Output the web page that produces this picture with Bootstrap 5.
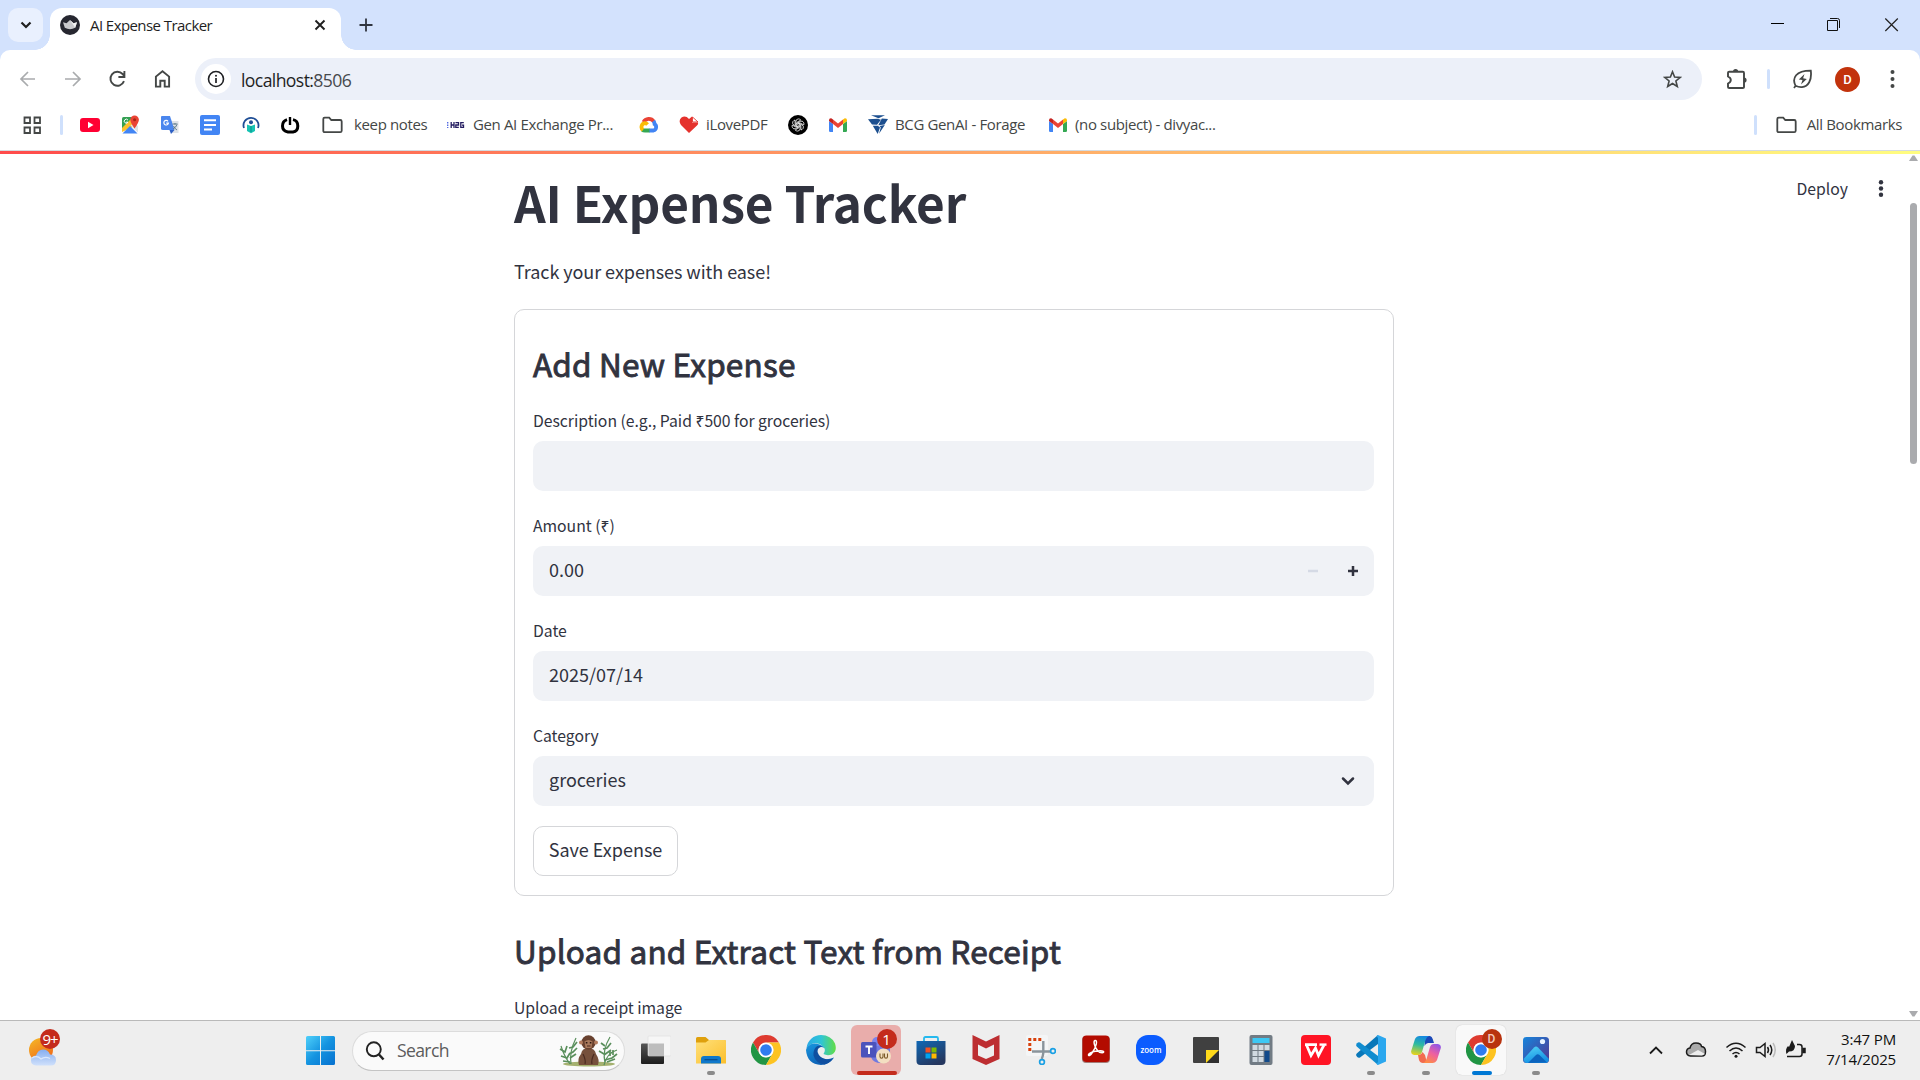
<!DOCTYPE html>
<html lang="en">
<head>
<meta charset="utf-8">
<title>AI Expense Tracker</title>
<meta name="viewport" content="width=device-width, initial-scale=1">
<link href="https://cdn.jsdelivr.net/npm/bootstrap@5.3.0/dist/css/bootstrap.min.css" rel="stylesheet">
<style>
body{width:1920px;height:1080px;overflow:hidden;background:#fff;font-family:"Open Sans","Noto Sans",sans-serif;color:#1f1f1f}
svg{display:block;flex:none}
.ui-text{white-space:nowrap;line-height:20px}
/* browser chrome */
.tabstrip{height:50px;background:#d3e2fd;flex:none}
.tabsearch{width:35px;height:34px;margin:8px 7px 0 8px;border-radius:10px;background:#e9f0fe}
.tab-active{position:relative;width:291px;height:42px;margin-top:8px;background:#fff;border-radius:12px 12px 0 0;padding:0 15px 8px 10px}
.tab-active::before,.tab-active::after{content:"";position:absolute;bottom:0;width:15px;height:15px}
.tab-active::before{left:-15px;background:radial-gradient(circle at 0 0,transparent 14.5px,#fff 15px)}
.tab-active::after{right:-15px;background:radial-gradient(circle at 100% 0,transparent 14.5px,#fff 15px)}
.tab-title{font-size:15px;letter-spacing:-.57px;margin-left:10px}
.toolbar-wrap{background:#d3e2fd;flex:none}
.toolbar{height:58px;background:#fff;border-radius:10px 10px 0 0}
.navicons{width:195px;padding-left:18px;gap:25px}
.omnibox{width:1507px;height:42px;border-radius:21px;background:#ecf0f9;padding:0 20px 0 6px}
.siteinfo{width:30px;height:30px;border-radius:50%;background:#fff}
.url{font-size:17.6px;margin-left:10px;padding-top:1px;letter-spacing:-.6px}
.url span{color:#46494d}
.avatar{width:25px;height:25px;border-radius:50%;background:#c2330c;color:#fff;font:500 13px Roboto,sans-serif}
.vsep{width:3px;height:20px;border-radius:2px;background:#cfe0fc;flex:none}
.bookmarks{height:42px;padding:0 18px 8px 23px;font-size:15px;letter-spacing:-.36px;color:#444746;flex:none}
.bookmarks .ui-text{margin-top:-2px}
.bm{display:flex;align-items:center;gap:7px;width:40px;flex:none;color:inherit;text-decoration:none}
.bm-folder{width:125px;gap:8px}
.bm-gen{width:194px;gap:8px}
.bm-love{width:109px}
.bm-bcg{width:180px}
/* app */
.app{height:870px;border-top:1px solid #d5dbe0;font-family:"Noto Sans CJK SC","Noto Sans CJK JP","Noto Sans",sans-serif;color:#31333f;overflow:hidden;position:relative;flex:none}
.deco{height:3px;background:linear-gradient(90deg,#ff4b4b,#fffd80)}
.main-col{width:880px;margin-left:514px;padding-top:15px}
.page-title{font-size:49.5px;line-height:66px;font-weight:700;margin:0 0 21px;white-space:nowrap;letter-spacing:-.15px}
.intro{font-size:18px;line-height:30px;margin:0 0 23px;letter-spacing:-.06px}
.form-box{height:587px;border:1px solid #d5d6d9;border-radius:10px;padding:19px 19px 0 18px}
.sub-title{font-size:31.5px;line-height:38px;font-weight:400;-webkit-text-stroke:.9px #31333f;letter-spacing:.2px;padding-top:15px;margin:0 0 24px;white-space:nowrap}
.field-label{display:block;font-size:15.75px;line-height:30px;margin-bottom:5px;white-space:nowrap;letter-spacing:-.03px}
.field-box{height:50px;border-radius:10px;background:#f0f2f6;font-size:18px;margin-bottom:20px;padding:0 16px 3px}
.save-btn{width:145px;height:50px;border:1px solid #d5d6d9;border-radius:10px;background:#fff;font-size:18px;color:#31333f;padding:0 0 3px;white-space:nowrap}
.app-tools{position:absolute;right:34px;top:23px;height:30px;font-size:15.75px;gap:30px}
.scroller{position:absolute;right:0;top:3px;width:14px;height:866px}
.thumb{height:261px;width:7px;border-radius:4px;background:#aaabae;margin:42px 0 0 4px}
.upload{margin-top:20px}
/* taskbar */
.taskbar{height:60px;border-top:1px solid #b9b9b9;background:#eee;flex:none}
.weather{width:306px;height:59px;padding:8px 0 0 28px}
.search-pill{width:273px;height:40px;margin:0 3.5px 0 16px;border-radius:20px;background:#fafafa;border:1px solid #dcdcdc;border-bottom-color:#c4c4c4;padding:0 5px 0 12px;font-size:17.6px;color:#5c5c5c}
.search-pill .ui-text{letter-spacing:-.65px;margin:-2px 0 0 12px}
.task{position:relative;width:55px;height:58px;display:flex;align-items:center;justify-content:center;align-self:flex-start;flex:none}
.run::after{content:"";position:absolute;bottom:4px;left:23.5px;width:8px;height:4px;border-radius:2px;background:#8a8a8a}
.tile{width:50px;height:50px;border-radius:6px;display:flex;align-items:center;justify-content:center}
.tile-red{background:#e9adab}
.tile-white{background:#f9f9f9;box-shadow:0 0 1px #bbb}
.dot{position:absolute;width:20px;height:20px;border-radius:50%;background:#c42b1c;color:#fff;font-size:15px;line-height:20px;text-align:center}
.bar-red{position:absolute;bottom:4px;left:8px;width:40px;height:4px;border-radius:2px;background:#c42b1c}
.bar-blue{position:absolute;bottom:4px;left:18px;width:20px;height:4px;border-radius:2px;background:#0078d4}
.tray{margin-left:auto;padding:0 24px 2px 0}
.clock{width:90px;text-align:right;font-size:15px;line-height:20px;letter-spacing:-.15px;margin-top:-1px;color:#111}
</style>
<script src="https://cdn.jsdelivr.net/npm/bootstrap@5.3.0/dist/js/bootstrap.bundle.min.js"></script>
</head>
<body class="d-flex flex-column">
<svg width="0" height="0" class="position-absolute">
  <defs>
    <symbol id="chrome" viewBox="0 0 30 30"><path fill="#de3b30" d="M2 7.5A15 15 0 0 1 28 7.5H15A7.5 7.5 0 0 0 8.500 18.750Z"/><path fill="#219544" d="M2 7.500A15 15 0 0 0 15 30L21.500 18.750A7.500 7.500 0 0 1 8.500 18.750Z"/><path fill="#fdc321" d="M28 7.500A15 15 0 0 1 15 30L21.500 18.750A7.500 7.500 0 0 0 15 7.500Z"/><circle cx="15" cy="15" r="7.300" fill="#fff"/><circle cx="15" cy="15" r="5.800" fill="#2f7cf0"/></symbol>
    <symbol id="gmail" viewBox="0 0 20 20"><path fill="#4285f4" d="M1 6l4 3v8H2.300Q1 17 1 15.700Z"/><path fill="#34a853" d="M19 6l-4 3v8h2.700q1.300 0 1.300-1.300Z"/><path fill="#ea4335" d="M5 4.500l5 4 5-4V9l-5 4-5-4Z"/><path fill="#c5221f" d="M1 5.200Q1 3 3.200 3.200L5 4.500V9L1 6Z"/><path fill="#fbbc04" d="M19 5.200Q19 3 16.800 3.200L15 4.500V9l4-3Z"/></symbol>
    <symbol id="folder" viewBox="0 0 21 18"><path fill="none" stroke="#444746" stroke-width="1.800" d="M1.300 14V2.900Q1.300 1.600 2.600 1.600H7.200L9.300 4H18.200Q19.700 4 19.700 5.400V14.800Q19.700 16.200 18.200 16.200H2.700Q1.300 16.200 1.300 14.800Z"/></symbol>
  </defs>
</svg>

<header>
  <div class="tabstrip d-flex">
    <div class="tabsearch d-flex align-items-center justify-content-center"><svg width="12" height="8" viewBox="0 0 12 8"><path d="M1.500 1.500L6 6l4.500-4.500" fill="none" stroke="#1f1f1f" stroke-width="2.200"/></svg></div>
    <div class="tab-active d-flex align-items-center">
      <svg width="20" height="20" viewBox="0 0 20 20"><circle cx="10" cy="10" r="10" fill="#262730"/><path d="M3 7.200l3.500 1L10 5l3.500 3.200 3.500-1-1.800 5.600Q10 15.500 4.800 12.800Z" fill="#c9cacd"/><path d="M10 5l3.500 3.200 3.500-1-1.800 5.600Z" fill="#f2f2f2"/></svg>
      <span class="ui-text tab-title">AI Expense Tracker</span>
      <svg class="ms-auto" width="12" height="12" viewBox="0 0 12 12"><path d="M1.500 1.500l9 9M10.500 1.500l-9 9" stroke="#1f1f1f" stroke-width="1.900"/></svg>
    </div>
    <svg style="margin:18px 0 0 18px" width="14" height="14" viewBox="0 0 14 14"><path d="M7 .5v13M.5 7h13" stroke="#303540" stroke-width="1.800"/></svg>
    <div class="ms-auto d-flex me-3 pe-1">
      <svg width="140" height="50" viewBox="0 0 140 50"><path d="M11 23.500h13" stroke="#000" stroke-width="1"/><path d="M67.500 20.500h10v10h-10ZM70 18.500h7.500q2 0 2 2V28" fill="none" stroke="#111" stroke-width="1"/><path d="M125.300 18.500l12.500 12.500M137.800 18.500L125.300 31" stroke="#222" stroke-width="1.200"/></svg>
    </div>
  </div>
  <div class="toolbar-wrap">
    <div class="toolbar d-flex align-items-center">
      <div class="navicons d-flex align-items-center">
        <svg width="20" height="20" viewBox="0 0 20 20"><path d="M17 10H3.500M10 3L3 10l7 7" fill="none" stroke="#a9abad" stroke-width="1.700"/></svg>
        <svg width="20" height="20" viewBox="0 0 20 20"><path d="M2 10h14.500M10 3l7 7-7 7" fill="none" stroke="#a9abad" stroke-width="1.700"/></svg>
        <svg width="20" height="20" viewBox="0 0 20 20"><path d="M16 12.200A7 7 0 1 1 14.600 5L16.200 6.800M16.400 2v6h-6" fill="none" stroke="#444746" stroke-width="1.900"/></svg>
        <svg width="20" height="20" viewBox="0 0 20 20"><path d="M2.900 17.600V7.600L9.500 2.200l6.600 5.400v10h-4.400v-5.800H7.300v5.800Z" fill="none" stroke="#444746" stroke-width="1.900"/></svg>
      </div>
      <div class="omnibox d-flex align-items-center">
        <div class="siteinfo d-flex align-items-center justify-content-center"><svg width="18" height="18" viewBox="0 0 18 18"><circle cx="9" cy="9" r="7.500" fill="none" stroke="#202124" stroke-width="1.600"/><path d="M9 8v5" stroke="#202124" stroke-width="1.700"/><circle cx="9" cy="5.700" r="1" fill="#202124"/></svg></div>
        <div class="ui-text url">localhost:<span>8506</span></div>
        <svg class="ms-auto" width="19" height="19" viewBox="0 0 19 19"><path d="M9.500 1.800l2.100 5.200 5.600.4-4.300 3.600 1.400 5.500-4.800-3-4.800 3L6.100 11 1.800 7.400 7.400 7Z" fill="none" stroke="#444746" stroke-width="1.600"/></svg>
      </div>
      <div class="d-flex align-items-center" style="margin-left:24px">
        <svg width="22" height="22" viewBox="0 0 22 22"><path d="M2 4.800Q2 3.700 3.200 3.700H16.800Q18 3.700 18 4.900V19.300Q18 20 16.800 20H3.200Q2 20 2 18.900V15.500Q4.800 14.200 4.800 12T2 8.500Z" fill="none" stroke="#444746" stroke-width="1.900"/><path d="M7 3.500a2.600 2.600 0 0 1 5.200 0ZM18 9.400a2.600 2.600 0 0 1 0 5.200Z" fill="#444746"/></svg>
        <div class="vsep" style="margin-left:19px"></div>
        <svg style="margin-left:22px" width="22" height="22" viewBox="0 0 22 22"><path d="M3.600 17.800C-.5 10 4 2.500 18.800 2.600c1.200 9.500-2.500 16-8.800 16.500-2.500.2-4.800-.5-6.400-1.300L2 20" fill="none" stroke="#444746" stroke-width="1.800"/><path d="M12.500 6L6.800 11.500l3.700.6-1.500 4.300 5.800-5.500-3.700-.6Z" fill="#444746"/></svg>
        <div class="avatar d-flex align-items-center justify-content-center" style="margin-left:21px">D</div>
        <svg style="margin-left:30px" width="5" height="20" viewBox="0 0 5 20"><g fill="#444746"><circle cx="2.500" cy="3" r="2"/><circle cx="2.500" cy="10" r="2"/><circle cx="2.500" cy="17" r="2"/></g></svg>
      </div>
    </div>
  </div>
  <nav class="bookmarks d-flex align-items-center">
    <svg width="19" height="19" viewBox="0 0 19 19"><path d="M1.500 1.500h5.500V7H1.500ZM11.500 1.500H17V7H11.500ZM1.500 11.500h5.500V17H1.500ZM11.500 11.500H17V17H11.500Z" fill="none" stroke="#444746" stroke-width="1.800"/></svg>
    <div class="vsep" style="margin:0 17px 0 18px"></div>
    <a class="bm" href="#"><svg width="20" height="20"><rect y="3" width="20" height="14" rx="3" fill="#ff0033"/><path d="M8 6.800v6.400l5.500-3.200Z" fill="#fff"/></svg></a>
    <a class="bm" href="#"><svg width="20" height="20" viewBox="0 0 20 20"><path d="M2 3.500Q2 2 3.500 2H15L2 15Z" fill="#34a053"/><path d="M2 17V13L12 3l3 8Z" fill="#fbc02d"/><path d="M2.500 18.500L10 11l7.500 7.500Z" fill="#4285f4"/><path d="M10.500 10.500L14 8l4 3v6.500Z" fill="#dfe3e6"/><path d="M14.500 13.500Q10.300 7.500 10.300 4.700a4.300 4.300 0 0 1 8.600 0Q18.900 7.500 14.500 13.500Z" fill="#ea4335"/><circle cx="14.600" cy="4.800" r="1.500" fill="#a52714"/><path d="M8 5.200A2 2 0 1 0 8 7.200H6" fill="none" stroke="#fff"/></svg></a>
    <a class="bm" href="#"><svg width="20" height="20" viewBox="0 0 20 20"><path d="M8 6h10.500v12H12Z" fill="#dfe3e8"/><path d="M2 1h8l4.500 14H3Q1 15 1 13.500V2Q1 1 2 1Z" fill="#4a86ee"/><path d="M9.500 15h5L11 19Z" fill="#2e60c4"/><path d="M8 6.300A2.300 2.300 0 1 0 8.400 8.200H6.200" fill="none" stroke="#fff" stroke-width="1.200"/><path d="M12.500 9h5M15 8v1.500M17 9.500q-1 3-4 4.500M13.500 11q1.500 3 3.500 4" fill="none" stroke="#607d8b"/></svg></a>
    <a class="bm" href="#"><svg width="20" height="20"><rect width="20" height="20" rx="2" fill="#4285f4"/><path d="M4 5.200h12M4 9.900h12M4 14.600h8" stroke="#fff" stroke-width="2"/></svg></a>
    <a class="bm" href="#"><svg width="20" height="20" viewBox="0 0 20 20"><path d="M4 13A7.500 7.500 0 1 1 18 13" fill="none" stroke="#1f4e96" stroke-width="1.800"/><circle cx="11" cy="7.200" r="2" fill="#1f4e96"/><path d="M7 9.500l4 1.500 4-1.500v6.500l-4 2.200-4-2.200Z" fill="#16c3b3"/><path d="M11 11v6" stroke="#0a8f88"/></svg></a>
    <a class="bm" href="#"><svg width="20" height="20" viewBox="0 0 20 20"><path d="M7 4.600Q2.500 6 2.500 11T8 17h5q4.800-.5 4.800-6T13 4.600" fill="none" stroke="#000" stroke-width="3"/><path d="M10 2v8" stroke="#000" stroke-width="2.400"/></svg></a>
    <a class="bm bm-folder" style="padding-left:2px" href="#"><svg width="21" height="18"><use href="#folder"/></svg><span class="ui-text ps-1 ms-n1" style="margin-left:-1px">keep notes</span></a>
    <a class="bm bm-gen" href="#"><svg width="20" height="20" viewBox="0 0 20 20"><g fill="none" stroke="#241c61" stroke-width="1.300"><path d="M6.200 7v6M9 7v6M6.200 10H9M10.500 7.700h3V10H10.800v2.300h3M18.800 7.700h-3v4.600h2.700V10.200H17"/><path d="M2.700 7v6" stroke="#4b64e0" stroke-dasharray="1.500 1"/></g></svg><span class="ui-text">Gen AI Exchange Pr...</span></a>
    <a class="bm" href="#"><svg width="20" height="20" viewBox="0 0 20 20"><g fill="none" stroke-width="3.800"><path d="M4.500 7.200A6 6 0 0 1 14.800 6.500" stroke="#ea4335"/><path d="M14.500 6Q15.500 7.300 15.600 9.200A3.500 3.500 0 0 1 14.500 15.500H10" stroke="#4285f4"/><path d="M10.500 15.500H6Q4.300 15.500 3.300 14.700" stroke="#34a853"/><path d="M4 15A3.800 3.800 0 0 1 5.800 8.200Q7.400 8.200 8.600 9.500" stroke="#fbbc04"/></g></svg></a>
    <a class="bm bm-love" href="#"><svg width="20" height="20" viewBox="0 0 20 20"><path d="M10 18L2 10Q-1 5.500 2.500 2.500 6.500 0 10 4L13 1.500V7.500H19Q19.500 9 18 10.500Z" fill="#e5322d"/><path d="M13.500 2v5H19Z" fill="#fff" stroke="#e5322d" stroke-width=".9"/></svg><span class="ui-text">iLovePDF</span></a>
    <a class="bm" href="#"><svg width="20" height="20" viewBox="0 0 20 20"><circle cx="10" cy="10" r="10" fill="#000"/><g fill="none" stroke="#fff" stroke-width=".75"><path id="petal" d="M8 10.800V6.200Q8.200 3.900 10.500 3.900 12 4 12.800 5L9 7.300V10"/><use href="#petal" transform="rotate(60 10 10)"/><use href="#petal" transform="rotate(120 10 10)"/><use href="#petal" transform="rotate(180 10 10)"/><use href="#petal" transform="rotate(240 10 10)"/><use href="#petal" transform="rotate(300 10 10)"/></g></svg></a>
    <a class="bm" href="#"><svg width="20" height="20"><use href="#gmail"/></svg></a>
    <a class="bm bm-bcg" href="#"><svg width="20" height="20" viewBox="0 0 20 20"><g fill="#1c4f8f"><path d="M3 .3h14L10.500 3.200Z"/><path d="M0 4.200l9.500-.4 3.500.9L9 9.800 4 9.500Z"/><path d="M13.800 3.600L20 4l-3.500 5.500L10.300 10.200Z"/><path d="M4.800 10.800l5-.1L12 12.500 9.700 19Z"/><path d="M11.500 10.900l5.300-.8L11 18.800l1.800-6.300Z"/></g></svg><span class="ui-text">BCG GenAI - Forage</span></a>
    <a class="bm" href="#"><svg width="20" height="20"><use href="#gmail"/></svg><span class="ui-text">(no subject) - divyac...</span></a>
    <div class="ms-auto d-flex align-items-center"><div class="vsep"></div><svg style="margin:0 10px 0 19px" width="21" height="18"><use href="#folder"/></svg><span class="ui-text">All Bookmarks</span></div>
  </nav>
</header>

<main class="app">
  <div class="deco"></div>
  <div class="main-col">
    <h1 class="page-title">AI Expense Tracker</h1>
    <p class="intro">Track your expenses with ease!</p>
    <form class="form-box">
      <h3 class="sub-title">Add New Expense</h3>
      <label class="field-label">Description (e.g., Paid ₹500 for groceries)</label>
      <div class="field-box"></div>
      <label class="field-label">Amount (₹)</label>
      <div class="field-box d-flex align-items-center">0.00
        <svg class="ms-auto" style="margin-top:3px" width="50" height="12" viewBox="0 0 50 12"><path d="M0 6h10" stroke="#d5dae5" stroke-width="2.500"/><path d="M40 6h10M45 1v10" stroke="#31333f" stroke-width="2.500"/></svg>
      </div>
      <label class="field-label">Date</label>
      <div class="field-box d-flex align-items-center">2025/07/14</div>
      <label class="field-label">Category</label>
      <div class="field-box d-flex align-items-center">groceries
        <svg class="ms-auto" style="margin:3px 3px 0 0" width="14" height="10" viewBox="0 0 14 10"><path d="M2 2.500l5 5 5-5" fill="none" stroke="#31333f" stroke-width="2.500" stroke-linecap="round"/></svg>
      </div>
      <button type="button" class="save-btn">Save Expense</button>
    </form>
    <section class="upload">
      <h3 class="sub-title">Upload and Extract Text from Receipt</h3>
      <label class="field-label">Upload a receipt image</label>
    </section>
  </div>
  <div class="app-tools d-flex align-items-center"><span>Deploy</span><svg style="margin-right:2px" width="6" height="20" viewBox="0 0 6 20"><g fill="#31333f"><circle cx="3" cy="3.200" r="2.200"/><circle cx="3" cy="9.500" r="2.200"/><circle cx="3" cy="15.800" r="2.200"/></g></svg></div>
  <div class="scroller d-flex flex-column">
    <svg style="margin:1px 0 0 3px" width="9" height="6"><path d="M0 6L3.500 0.500h2L9 6Z" fill="#aaabae"/></svg>
    <div class="thumb"></div>
    <svg class="mt-auto" style="margin:0 0 3px 3px" width="9" height="6"><path d="M0 0L3.500 5.500h2L9 0Z" fill="#aaabae"/></svg>
  </div>
</main>

<footer class="taskbar d-flex align-items-center">
  <div class="weather position-relative">
    <svg width="32" height="38" viewBox="0 0 32 38"><defs><linearGradient id="sun" x2=".6" y2="1"><stop stop-color="#f5ba28"/><stop offset="1" stop-color="#f06b18"/></linearGradient><linearGradient id="cl" x2="0" y2="1"><stop stop-color="#86aef0"/><stop offset="1" stop-color="#cfe0fb"/></linearGradient></defs><circle cx="13" cy="21" r="12" fill="url(#sun)"/><path d="M8 36.500Q3 36 3 31.500T8 26.500Q10 20.500 15 20.500T22 25.500Q28 25.500 28 31T23 36.500Z" fill="url(#cl)"/><path d="M4 29q5-3 9 1 4-3 9-.5" fill="none" stroke="#dbe8fc" stroke-width="1.200"/></svg>
    <span class="dot" style="left:40px;top:8px;letter-spacing:-1px">9+</span>
  </div>
  <svg width="30" height="30" viewBox="0 0 30 30"><defs><linearGradient id="win" x2="1" y2="1"><stop stop-color="#4fd0fa"/><stop offset=".5" stop-color="#1493e0"/><stop offset="1" stop-color="#0670cf"/></linearGradient></defs><path fill="url(#win)" d="M1.500 0H14V14.200H0V1.500Q0 0 1.500 0ZM15 0H27.500Q29 0 29 1.500V14.200H15ZM0 15.200H14V29H1.500Q0 29 0 27.500ZM15 15.200H29V27.500Q29 29 27.500 29H15Z"/></svg>
  <div class="search-pill d-flex align-items-center">
    <svg width="20" height="20" viewBox="0 0 20 20"><circle cx="8.800" cy="8.300" r="7" fill="none" stroke="#222" stroke-width="1.900"/><path d="M14 13.500l4.500 5" stroke="#222" stroke-width="2.500"/></svg>
    <span class="ui-text">Search</span>
    <svg class="ms-auto" width="60" height="34" viewBox="0 0 60 34"><ellipse cx="30" cy="30" rx="26" ry="2.500" fill="#a5b170"/><g fill="none" stroke="#5a8f5c" stroke-width="1.200"><path d="M11 30Q5 22 2 12M12 30Q10 18 17 4M46 29Q43 16 51 3M45 31Q48 19 58 16"/><path d="M1 15l5 3 2-6M2 22l6 2 3-5M4 27l7 1M10 14l4-1 4-5M10 20l4-2 4-4M11 24l6-4M44 15l4-1 4-5M42 9l4 3M40 17l5 3M45 21l7-5M46 26l7-2 5-4M48 28l8-3M51 22v-5M54 21v-5" stroke-width="1.700"/></g><path d="M20 31Q18 25 22 20 23 14 29 14 36 14 37 20 41 26 39 31Z" fill="#76503c"/><circle cx="29.500" cy="8.500" r="7.200" fill="#68412f"/><circle cx="22" cy="8.500" r="2" fill="#b37c5f"/><circle cx="37" cy="8.500" r="2" fill="#b37c5f"/><path d="M25.500 7.500Q29.500 4.500 33.500 7.500L32.500 14H26.500Z" fill="#a8785c"/><path d="M26.800 8.700h1.600M30.800 8.700h1.600" stroke="#2b1710" stroke-width="1.500"/><path d="M28 12h3.500M24 20q3 6 2 10M35 20q-3 6-2 10" fill="none" stroke="#4a2b20" stroke-width="1.200"/></svg>
  </div>

  <div class="task"><svg width="30" height="30" viewBox="0 0 30 30"><defs><linearGradient id="tv" x2="0" y2="1"><stop stop-color="#555"/><stop offset="1" stop-color="#1d1d1d"/></linearGradient></defs><rect y="8.500" width="23" height="20.500" rx="1" fill="url(#tv)"/><rect x="7" y="1" width="23" height="20" rx="1" fill="#f6f6f6" stroke="#ddd" stroke-width=".6"/><path d="M7.500 8.500H23V21H7.500Z" fill="#bdbdbd"/></svg></div>
  <div class="task run"><svg width="30" height="30" viewBox="0 0 30 30"><defs><linearGradient id="fo" x2="1" y2="1"><stop stop-color="#ffe07a"/><stop offset="1" stop-color="#fbbf2c"/></linearGradient></defs><path d="M0 9V3.500Q0 2 1.500 2H9.500L13 5H28.500Q30 5 30 6.500V12H0Z" fill="#dfa00c"/><path d="M0 7.500H9.500L13 5H28.500Q30 5 30 6.500V28.500H0Z" fill="url(#fo)"/><path d="M5 28.500V24Q5 21 8 21H22Q25 21 25 24v4.500Z" fill="#0f78cb"/><path d="M8.500 24.700h13" stroke="#0a4c8c" stroke-width="1.200"/></svg></div>
  <div class="task"><svg width="30" height="30"><use href="#chrome"/></svg></div>
  <div class="task"><svg width="30" height="30" viewBox="0 0 30 30"><defs><linearGradient id="ed" x2="1"><stop stop-color="#2aa9e6"/><stop offset=".5" stop-color="#2fc5d6"/><stop offset="1" stop-color="#62dd45"/></linearGradient><linearGradient id="ed2" x2=".5" y2="1"><stop stop-color="#1896df"/><stop offset="1" stop-color="#0d5fb4"/></linearGradient></defs><path d="M.5 13A14.600 14.600 0 0 1 15 0Q25 0 29 8.500 31.500 16.500 26 19.500 21 21 17.500 19 19.500 16 18.500 13.500 14.500 7.500 7 8.500 3 9.500.5 13Z" fill="url(#ed)"/><path d="M0 15Q1 9.500 8 8.500 15 8.500 18.300 13 14.500 10.500 11.700 14 9.500 19 14.500 22.500 20 26 28 22.500 23 30 15 30 1 29 0 15Z" fill="url(#ed2)"/><path d="M10 12Q12.500 10 16.500 11.500 11 12 11.500 17 13.500 23 20 24.200T28 22.500Q24 28 18.500 29.500 9.500 28 7.500 20.500 7 15.500 10 12Z" fill="#0f4fa0"/></svg></div>
  <div class="task"><div class="tile tile-red"><svg width="30" height="30" viewBox="0 0 30 30"><circle cx="16" cy="7" r="5" fill="#7b83eb"/><circle cx="25" cy="10" r="4" fill="#5059c9"/><path d="M10 11H29V18Q28 26 20 28 12 28 10 22Z" fill="#7079df"/><rect y="7" width="15.500" height="15.500" rx="1.500" fill="#4b53bc"/><path d="M4.500 11.500h7M8 11.500v7.500" stroke="#fff" stroke-width="1.900"/><circle cx="22.500" cy="21" r="7.500" fill="#f3dfc1"/><path d="M19 18.500v3q0 1.700 1.500 1.700T22 21.500v-3M23.500 18.500v3q0 1.700 1.500 1.700t1.500-1.700v-3" fill="none" stroke="#7a5a28" stroke-width="1.100"/></svg></div><span class="dot" style="left:28px;top:8px">1</span><span class="bar-red"></span></div>
  <div class="task"><svg width="30" height="30" viewBox="0 0 30 30"><defs><linearGradient id="st" x2=".6" y2="1"><stop stop-color="#1068b5"/><stop offset="1" stop-color="#25375f"/></linearGradient></defs><path d="M8 7V3.500Q8 2 9.500 2h11Q22 2 22 3.500V7" fill="none" stroke="#25b9ee" stroke-width="1.800"/><path d="M.5 6H29.500V26Q29.500 30 25.500 30H4.500Q.5 30 .5 26Z" fill="url(#st)"/><path fill="#f25022" d="M9.500 12.500h5v5h-5Z"/><path fill="#7fba00" d="M15.500 12.500h5v5h-5Z"/><path fill="#00a4ef" d="M9.500 18.500h5v5h-5Z"/><path fill="#ffb900" d="M15.500 18.500h5v5h-5Z"/></svg></div>
  <div class="task"><svg width="30" height="30" viewBox="0 0 30 30"><path d="M1.500 0L15 6.500 28.500 0V24L15 30 1.500 24Z" fill="#bd2e31"/><path d="M7 9.500L15 13.500 23 9.500V20.500L15 24 7 20.500Z" fill="#eee"/></svg></div>
  <div class="task"><svg width="30" height="30" viewBox="0 0 30 30"><rect width="22" height="21" rx="2" fill="#f4f5f6"/><path d="M3.800 16V4.500H16.500" fill="none" stroke="#d8400a" stroke-width="3" stroke-dasharray="3 2"/><path d="M17.300 6V18Q17 21 15.700 24M6 16.500H19L25 16.500" fill="none" stroke="#8a949b" stroke-width="2.400"/><circle cx="27" cy="16" r="2.400" fill="none" stroke="#1aa0e4" stroke-width="1.700"/><circle cx="16" cy="27" r="2.400" fill="none" stroke="#1aa0e4" stroke-width="1.700"/></svg></div>
  <div class="task"><svg width="30" height="30" viewBox="0 0 30 30"><rect x="1" y="1" width="28" height="27" rx="4" fill="#7c403b" opacity=".65"/><rect x="1.500" y=".5" width="27" height="26.500" rx="4" fill="#b30b00"/><path d="M14 5.500C17 5 15 12 12 16.500 9 21.500 7.200 21 7.500 19.800 8.500 16.500 20 14.800 22.300 16.300 24 18 19.500 19 16.500 15.500 13.500 12 12 6 14 5.500Z" fill="none" stroke="#fff" stroke-width="1.500"/></svg></div>
  <div class="task"><svg width="30" height="30" viewBox="0 0 30 30"><rect width="30" height="30" rx="12" fill="#0b5cff"/><text x="15" y="17.800" text-anchor="middle" textLength="21" font-family="Open Sans" font-weight="600" font-size="9" fill="#fff" lengthAdjust="spacingAndGlyphs">zoom</text></svg></div>
  <div class="task"><svg width="30" height="30" viewBox="0 0 30 30"><rect x="2" y="2" width="26" height="26" rx="1" fill="#404040"/><path d="M15 28L28 15V28Z" fill="#303030"/><path d="M15 15h13L15 28Z" fill="#ffda1a"/></svg></div>
  <div class="task"><svg width="30" height="30" viewBox="0 0 30 30"><rect x="3.500" width="23" height="30" rx="2" fill="#717b84"/><path d="M6.500 3h17v5h-17Z" fill="#3cc8f4"/><path d="M6.500 10h5v5h-5ZM12.500 10h5v5h-5ZM18.500 10h5v5h-5ZM6.500 16h5v5h-5ZM12.500 16h5v5h-5ZM6.500 22h5v5h-5ZM12.500 22h5v5h-5Z" fill="#d1dae1"/><path d="M18.500 16h5v11h-5Z" fill="#114a8b"/></svg></div>
  <div class="task"><svg width="30" height="30" viewBox="0 0 30 30"><rect width="30" height="30" rx="4" fill="#ff1424"/><path d="M4 9.700h12M5.500 10l4.500 10.500L14.500 13l3 7.500L23 10" fill="none" stroke="#fff" stroke-width="2.700"/><path d="M18.500 9.600h7" stroke="#fff" stroke-width="2.400"/></svg></div>
  <div class="task run"><svg width="30" height="30" viewBox="0 0 30 30"><path d="M22 0V9L4 22.500Q2.500 23.300 1 21.800L.3 20.500Q-.2 19.300 1 18.200Z" fill="#0877b9"/><path d="M22 30V21L4 7.500Q2.500 6.700 1 8.200L.3 9.500Q-.2 10.700 1 11.800Z" fill="#108ccf"/><path d="M22 0L30 3.500V26.500L22 30 20.500 29 22 27V3L20.500 1Z" fill="#2ba7ee"/></svg></div>
  <div class="task run"><svg width="30" height="30" viewBox="0 0 30 30"><defs><linearGradient id="c1" x1=".5" x2=".3" y2="1"><stop stop-color="#1589e0"/><stop offset=".45" stop-color="#2dbba0"/><stop offset="1" stop-color="#e8d31d"/></linearGradient><linearGradient id="c2" x1=".8" x2=".3" y2="1"><stop stop-color="#8e55e8"/><stop offset=".5" stop-color="#ee60a0"/><stop offset="1" stop-color="#ff8c45"/></linearGradient></defs><path d="M14 1H19Q21 1.500 21.700 4L23 8H17Q14.500 8.500 13.500 11Z" fill="#1b48b8"/><path d="M8.500 1H18Q15.500 2 14.500 5L11 17Q10 20 7 20H3Q-1 19 .5 15L4 4Q5.500 1 8.500 1Z" fill="url(#c1)"/><path d="M7 20Q10.500 20 11.500 17L14 20 16 28H12Q9 28 8 25Z" fill="#f26b4f"/><path d="M21.500 28H12Q14.500 27 15.500 24L19 12Q20 9 23 9H27Q31 10 29.500 14L26 25Q24.500 28 21.500 28Z" fill="url(#c2)"/></svg></div>
  <div class="task"><div class="tile tile-white"><svg width="30" height="30"><use href="#chrome"/></svg></div><span class="dot" style="left:28px;top:8px;background:#b8330f;color:#f3c9bb;font:500 12px/20px Roboto,sans-serif">D</span><span class="bar-blue"></span></div>
  <div class="task run"><svg width="30" height="30" viewBox="0 0 30 30"><defs><linearGradient id="ph" x2="1" y2="1"><stop stop-color="#1685dc"/><stop offset="1" stop-color="#53358f"/></linearGradient><linearGradient id="ph2" x2=".4" y2="1"><stop stop-color="#54d6f7"/><stop offset="1" stop-color="#1590e3"/></linearGradient></defs><rect x="2" y="2" width="26" height="26" rx="3.500" fill="url(#ph)"/><path d="M2.500 24L13 12.500Q15 10.500 17 12.500L28 24Q27.500 28 24.500 28H5.500Q3 27.500 2.500 24Z" fill="url(#ph2)"/><path d="M7 28L15 20Q16.500 18.500 18.500 20L26 27.500Z" fill="#0c63bd"/><circle cx="21.500" cy="6.500" r="2.600" fill="#e5f2ff"/></svg></div>

  <div class="tray d-flex align-items-center">
    <svg width="158" height="24" viewBox="0 0 158 24"><g fill="none" stroke="#1b1b1b" stroke-width="1.500"><path d="M2 15.500L8 9.500l6 6" stroke-width="1.800"/><path d="M42.500 18Q38.500 17.500 38.500 14T42 10Q43 5 48 5T53.500 8.500Q57.500 9 57.500 13.500T54 18Z" fill="#aaa"/><path d="M41 17L50 12l7 4-3 1.500Z" fill="#eee" stroke="none"/><path d="M78.500 9.500q9.500-8.500 19 0M81.500 13q6.500-6 13 0M84.500 16q3.500-3 7 0"/><circle cx="88" cy="18.300" r="1.500" fill="#1b1b1b" stroke="none"/><path d="M108.500 9.500H112L117 5.500V18.500L112 14.500H108.500ZM119.500 9q2 3 0 6M122 7q3.500 5 0 10"/><path d="M125 5q4.500 7 0 14" stroke="#bbb"/><path d="M149 6.500h2.500Q154 6.500 154 9v7Q154 18.500 151.500 18.500H139"/><path d="M155 10.500h2v4h-2Z" fill="#1b1b1b"/><path d="M144 2L147 8Q147 13.500 141 13.500L138.500 16Q137 11 140 8L141 9Z" fill="#1b1b1b" stroke="none"/></g></svg>
    <div class="clock">3:47 PM<br>7/14/2025</div>
  </div>
</footer>
</body>
</html>
